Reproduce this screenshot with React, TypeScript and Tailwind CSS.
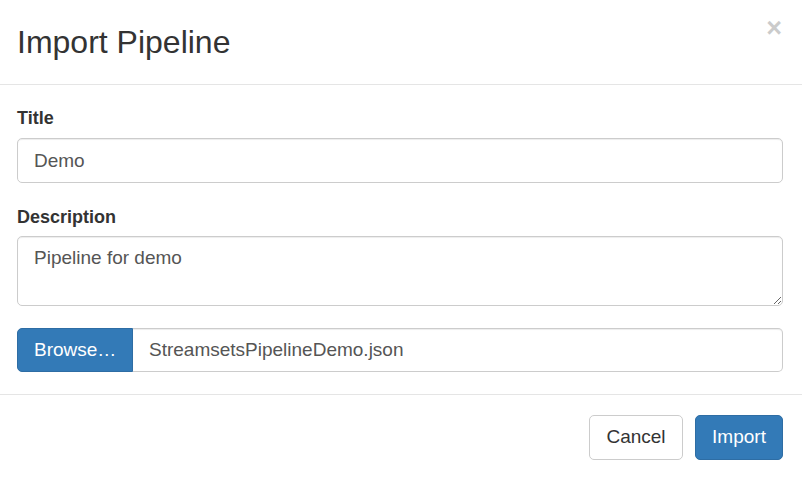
import React from "react";

export default function App() {
  return (
    <div className="w-[802px] h-[478px] bg-white text-[#333] font-['Liberation_Sans',Arial,sans-serif] overflow-hidden">
      <div className="h-[85px] border-b border-[#e5e5e5] flex items-center justify-between pl-[17px] pr-[20px]">
        <h3 className="text-[32px] leading-[36px] text-[#333] m-0">Import Pipeline</h3>
        <span className="self-start mt-[12px] text-[27px] font-bold leading-[32px] text-black opacity-20">×</span>
      </div>
      <div className="pl-[17px] pr-[19px] pt-[21px] pb-[22px] border-b border-[#e5e5e5]">
        <label className="block text-[18px] font-bold leading-[24px] mb-[8px]">Title</label>
        <input
          readOnly
          value="Demo"
          className="block w-full h-[45px] border border-[#ccc] rounded-[5px] px-[16px] text-[19px] text-[#555] shadow-[inset_0_1px_1px_rgba(0,0,0,0.075)] outline-none"
        />
        <label className="block text-[18px] font-bold leading-[24px] mt-[22px] mb-[7px]">Description</label>
        <textarea
          readOnly
          value="Pipeline for demo"
          className="block w-full h-[70px] border border-[#ccc] rounded-[5px] px-[16px] pt-[8px] text-[19px] leading-[26px] text-[#555] shadow-[inset_0_1px_1px_rgba(0,0,0,0.075)] outline-none resize-y"
        />
        <div className="flex mt-[22px] h-[44px]">
          <div className="w-[116px] h-full bg-[#337ab7] border border-[#2e6da4] rounded-l-[5px] text-white text-[19px] flex items-center pl-[16px]">
            Browse…
          </div>
          <div className="flex-1 h-full border border-l-0 border-[#ccc] rounded-r-[5px] flex items-center pl-[16px] text-[19px] text-[#555] shadow-[inset_0_1px_1px_rgba(0,0,0,0.075)]">
            StreamsetsPipelineDemo.json
          </div>
        </div>
      </div>
      <div className="flex justify-end gap-[12px] px-[19px] pt-[20px]">
        <button className="w-[94px] h-[45px] border border-[#ccc] rounded-[5px] bg-white text-[19px] text-[#333]">
          Cancel
        </button>
        <button className="w-[88px] h-[45px] border border-[#2e6da4] rounded-[5px] bg-[#337ab7] text-[19px] text-white">
          Import
        </button>
      </div>
    </div>
  );
}
